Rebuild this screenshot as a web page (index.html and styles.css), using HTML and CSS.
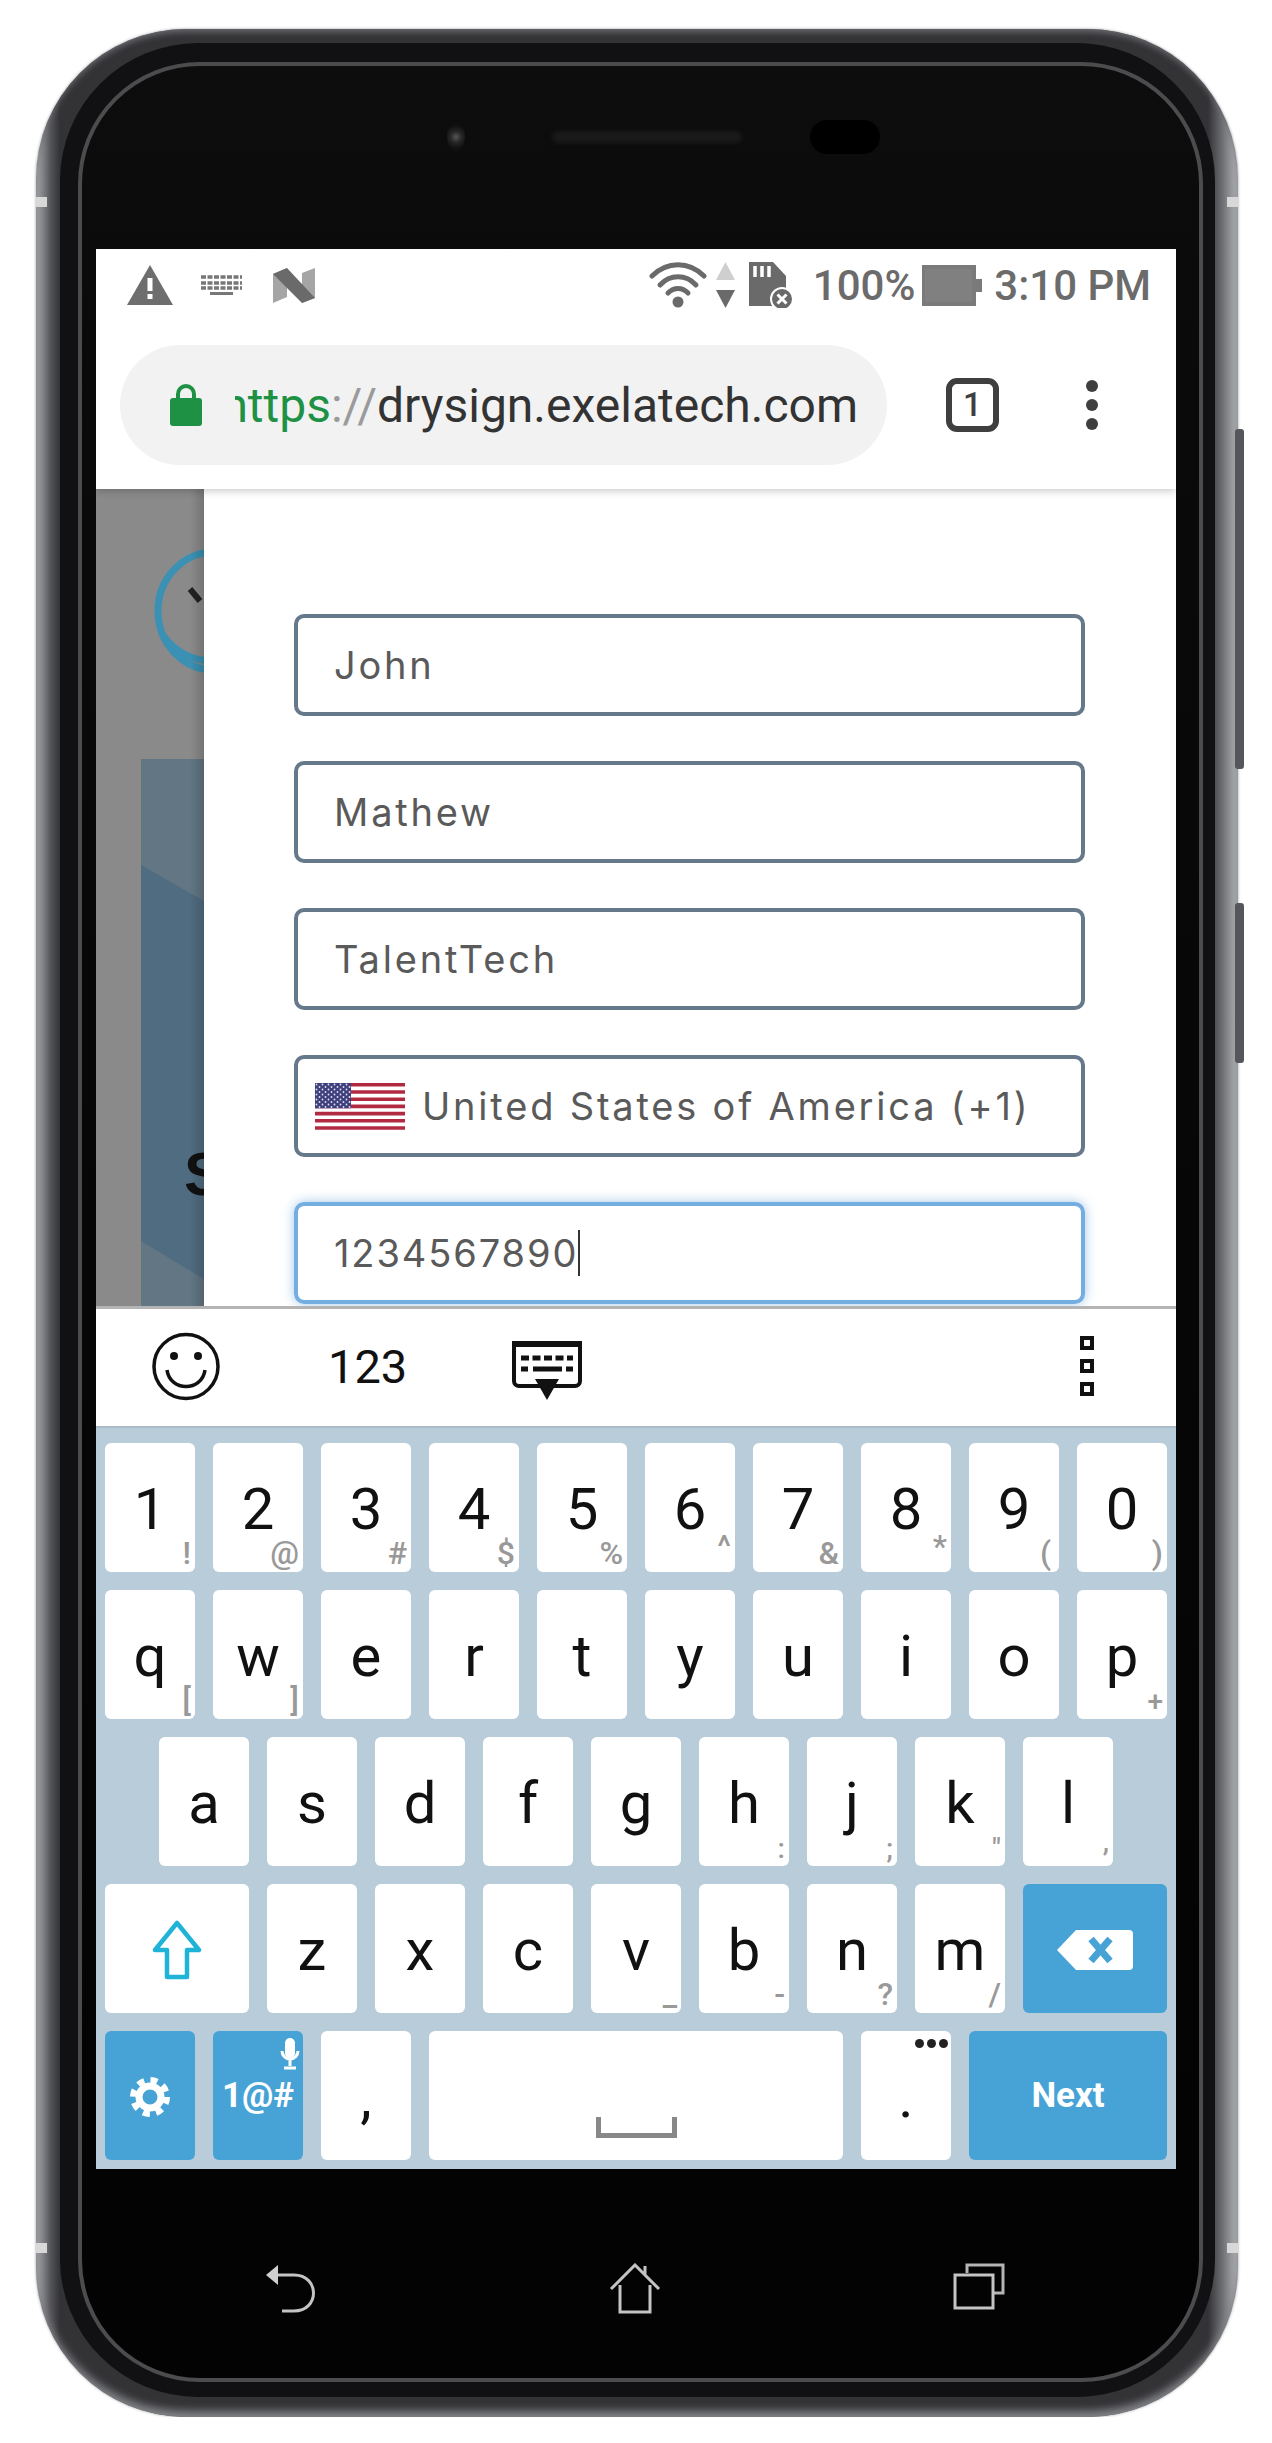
FILE: index.html
```html
<!DOCTYPE html>
<html lang="en">
<head>
  <meta charset="UTF-8" />
  <title>Phone form</title>
  <link rel="stylesheet" href="styles.css">
</head>
<body>
  <div class="phone">
    <span class="side-btn side-btn-long"></span>
    <span class="side-btn side-btn-short"></span>
    <span class="notch notch-tl"></span>
    <span class="notch notch-tr"></span>
    <span class="notch notch-bl"></span>
    <span class="notch notch-br"></span>
    <div class="frame">
      <div class="face">
        <div class="sensors">
          <span class="camera"></span>
          <span class="speaker"></span>
          <span class="oval"></span>
        </div>

        <div class="screen">
          <div class="chrome">
            <div class="status">
              <svg class="ic-warn" width="46" height="40" viewBox="0 0 46 40">
                <polygon points="23,0 46,40 0,40" fill="#6e6e6e"/>
                <rect x="20.5" y="13" width="5" height="13" fill="#fff"/>
                <rect x="20.5" y="29" width="5" height="5" fill="#fff"/>
              </svg>
              <svg class="ic-kb" width="41" height="20" viewBox="0 0 41 20">
                <path d="M0 2h41M0 8h41M0 13h41" stroke="#777" stroke-width="3.5" stroke-dasharray="5 1.5"/>
                <rect x="9" y="17" width="23" height="3" fill="#777"/>
              </svg>
              <svg class="ic-n" width="42" height="35" viewBox="0 0 42 35">
                <polygon points="0,6 14,0 14,29 0,35" fill="#a5a5a5"/>
                <polygon points="29,5 42,0 42,30 29,35" fill="#a5a5a5"/>
                <polygon points="0,6 14,0 42,30 29,35" fill="#6a6a6a"/>
              </svg>
              <svg class="ic-wifi" width="58" height="46" viewBox="0 0 58 46">
                <g fill="none" stroke="#6a6a6a" stroke-width="5" stroke-linecap="round">
                  <path d="M3 14C18 -1 40 -1 55 14"/>
                  <path d="M11 23C21 12 37 12 47 23"/>
                  <path d="M19 31C25 25 33 25 39 31"/>
                </g>
                <circle cx="29" cy="40" r="5.5" fill="#6a6a6a"/>
              </svg>
              <svg class="ic-arrows" width="19" height="46" viewBox="0 0 19 46">
                <polygon points="9.5,0 19,18 0,18" fill="#cfcfcf"/>
                <polygon points="0,28 19,28 9.5,46" fill="#6a6a6a"/>
              </svg>
              <svg class="ic-sd" width="46" height="46" viewBox="0 0 46 46">
                <path d="M0 0H24L37 14V44H0Z" fill="#6a6a6a"/>
                <path d="M6 4v11M13 4v11M20 4v11" stroke="#fff" stroke-width="3.5"/>
                <circle cx="33" cy="37" r="11" fill="#6a6a6a" stroke="#fff" stroke-width="2"/>
                <path d="M28.5 32.5l9 9M37.5 32.5l-9 9" stroke="#fff" stroke-width="3"/>
              </svg>
              <span class="stat-text stat-pct">100%</span>
              <svg class="ic-batt" width="60" height="41" viewBox="0 0 60 41">
                <rect x="0" y="0" width="54" height="41" fill="#7a7a7a"/>
                <rect x="54" y="14" width="6" height="13" fill="#7a7a7a"/>
                <rect x="3" y="4" width="47" height="33" fill="#808080"/>
              </svg>
              <span class="stat-text stat-time">3:10 PM</span>
            </div>
            <div class="urlrow">
              <div class="pill">
                <svg class="ic-lock" width="32" height="42" viewBox="0 0 32 42">
                  <path d="M8 17V10a8 8 0 0 1 16 0v7" fill="none" stroke="#1e9145" stroke-width="4"/>
                  <rect x="0" y="14" width="32" height="28" rx="3" fill="#1e9145"/>
                </svg>
                <div class="url"><span class="url-in"><span class="url-https">https</span><span class="url-sep">://</span>drysign.exelatech.com</span></div>
              </div>
              <div class="tabs">1</div>
              <div class="dots"><i></i><i></i><i></i></div>
            </div>
          </div>

          <div class="page">
            <svg class="backdrop" width="108" height="817" viewBox="0 0 108 817">
              <rect width="108" height="817" fill="#8a8a8a"/>
              <g fill="none" stroke="#3a91b3" stroke-width="7">
                <ellipse cx="118" cy="122" rx="56" ry="59"/>
                <path d="M66 145C80 165 100 172 118 172"/>
              </g>
              <path d="M94 100l10 12" stroke="#222" stroke-width="6"/>
              <rect x="45" y="270" width="63" height="547" fill="#627684"/>
              <polygon points="45,376 108,412 108,790 45,752" fill="#506c80"/>
              <text x="88" y="706" class="backdrop-s">S</text>
              <rect x="94" width="14" height="817" fill="url(#modalfade)"/>
              <defs>
                <linearGradient id="modalfade">
                  <stop offset="0" stop-color="#000" stop-opacity="0"/>
                  <stop offset="1" stop-color="#000" stop-opacity=".16"/>
                </linearGradient>
              </defs>
            </svg>
            <div class="modal">
              <div class="field">John</div>
              <div class="field">Mathew</div>
              <div class="field">TalentTech</div>
              <div class="field field-country">
                <svg class="flag" width="90" height="47" viewBox="0 0 90 47">
                  <defs>
                    <pattern id="stars" width="6" height="5" patternUnits="userSpaceOnUse">
                      <circle cx="1.5" cy="1.5" r=".9" fill="#dfe0ee"/>
                      <circle cx="4.5" cy="4" r=".9" fill="#dfe0ee"/>
                    </pattern>
                  </defs>
                  <rect width="90" height="47" fill="#fff"/>
                  <path d="M0 1.8h90M0 9h90M0 16.2h90M0 23.4h90M0 30.6h90M0 37.8h90M0 45h90" stroke="#b22a41" stroke-width="3.6"/>
                  <rect width="36" height="25.3" fill="#3f3f7d"/>
                  <rect width="36" height="25.3" fill="url(#stars)"/>
                </svg>
                United States of America (+1)
              </div>
              <div class="field field-focus">1234567890<span class="caret"></span></div>
            </div>
          </div>

          <div class="kb-tools">
            <svg class="ic-smile" width="68" height="69" viewBox="0 0 68 69">
              <circle cx="34" cy="34.5" r="32" fill="none" stroke="#111" stroke-width="3.5"/>
              <circle cx="22" cy="24" r="4" fill="#111"/>
              <circle cx="46" cy="24" r="4" fill="#111"/>
              <path d="M15 38C18 60 50 60 53 38" fill="none" stroke="#111" stroke-width="3.5"/>
            </svg>
            <span class="tool-num">123</span>
            <svg class="ic-hide" width="70" height="59" viewBox="0 0 70 59">
              <path d="M2 1.5H68V40a5 5 0 0 1-5 5H7a5 5 0 0 1-5-5Z" fill="none" stroke="#111" stroke-width="4"/>
              <rect x="0" y="0" width="70" height="6" fill="#111"/>
              <path d="M9 17h52" stroke="#111" stroke-width="5" stroke-dasharray="8 3.5"/>
              <path d="M9 28h7M21 28h29M54 28h7" stroke="#111" stroke-width="5"/>
              <polygon points="23,38 47,38 35,59" fill="#111"/>
            </svg>
            <div class="tool-more"><i></i><i></i><i></i></div>
          </div>

          <div class="keys">
            <div class="row">
              <div class="key">1<span class="hint">!</span></div>
              <div class="key">2<span class="hint">@</span></div>
              <div class="key">3<span class="hint">#</span></div>
              <div class="key">4<span class="hint">$</span></div>
              <div class="key">5<span class="hint">%</span></div>
              <div class="key">6<span class="hint hint-up">^</span></div>
              <div class="key">7<span class="hint">&amp;</span></div>
              <div class="key">8<span class="hint hint-up">*</span></div>
              <div class="key">9<span class="hint hint-in">(</span></div>
              <div class="key">0<span class="hint">)</span></div>
            </div>
            <div class="row">
              <div class="key">q<span class="hint">[</span></div>
              <div class="key">w<span class="hint">]</span></div>
              <div class="key">e</div>
              <div class="key">r</div>
              <div class="key">t</div>
              <div class="key">y</div>
              <div class="key">u</div>
              <div class="key">i</div>
              <div class="key">o</div>
              <div class="key">p<span class="hint hint-sm">+</span></div>
            </div>
            <div class="row row-mid">
              <div class="key">a</div>
              <div class="key">s</div>
              <div class="key">d</div>
              <div class="key">f</div>
              <div class="key">g</div>
              <div class="key">h<span class="hint hint-sm">:</span></div>
              <div class="key">j<span class="hint hint-sm">;</span></div>
              <div class="key">k<span class="hint hint-sm">"</span></div>
              <div class="key">l<span class="hint hint-sm hint-up">,</span></div>
            </div>
            <div class="row">
              <div class="key key-wide">
                <svg width="50" height="60" viewBox="0 0 50 60">
                  <path d="M25 3L47 30H35V57H15V30H3Z" fill="none" stroke="#1fb3d8" stroke-width="4.5" stroke-linejoin="round"/>
                </svg>
              </div>
              <div class="key">z</div>
              <div class="key">x</div>
              <div class="key">c</div>
              <div class="key">v<span class="hint">_</span></div>
              <div class="key">b<span class="hint">-</span></div>
              <div class="key">n<span class="hint">?</span></div>
              <div class="key">m<span class="hint">/</span></div>
              <div class="key key-wide key-blue">
                <svg width="76" height="40" viewBox="0 0 76 40">
                  <path d="M19 0H72a4 4 0 0 1 4 4V36a4 4 0 0 1-4 4H19L0 20Z" fill="#fff"/>
                  <path d="M34 9l19 22M53 9L34 31" stroke="#47a3d6" stroke-width="7"/>
                </svg>
              </div>
            </div>
            <div class="row">
              <div class="key key-blue">
                <svg width="40" height="42" viewBox="0 0 40 42">
                  <circle cx="20" cy="21" r="11" fill="none" stroke="#fff" stroke-width="7"/>
                  <circle cx="20" cy="21" r="17" fill="none" stroke="#fff" stroke-width="6" stroke-dasharray="7 6.35"/>
                </svg>
              </div>
              <div class="key key-blue key-label">1@#
                <svg class="ic-mic" width="20" height="32" viewBox="0 0 20 32">
                  <rect x="5" y="0" width="10" height="20" rx="5" fill="#fff"/>
                  <path d="M2 13a8 8 0 0 0 16 0M10 21v7M4 30h12" fill="none" stroke="#fff" stroke-width="3"/>
                </svg>
              </div>
              <div class="key">,</div>
              <div class="key key-space">
                <svg width="81" height="21" viewBox="0 0 81 21">
                  <path d="M2.5 0V18.5H78.5V0" fill="none" stroke="#888" stroke-width="5"/>
                </svg>
              </div>
              <div class="key">.<span class="more-dots"><i></i><i></i><i></i></span></div>
              <div class="key key-blue key-next">Next</div>
            </div>
          </div>
        </div>

        <div class="navkeys">
          <svg width="53" height="50" viewBox="0 0 53 50">
            <path d="M8 12H30C56 12 56 48 30 48H18" fill="none" stroke="#c4c4c4" stroke-width="3"/>
            <polygon points="14,2 2,12 14,22" fill="#d0d0d0"/>
          </svg>
          <svg width="52" height="51" viewBox="0 0 52 51">
            <path d="M2 26L26 2L50 26M11 22V49H41V22M36 3V12" fill="none" stroke="#c4c4c4" stroke-width="3"/>
          </svg>
          <svg width="52" height="47" viewBox="0 0 52 47">
            <path d="M14 10V2H50V30H40" fill="none" stroke="#b4b4b4" stroke-width="3"/>
            <rect x="2" y="12" width="38" height="33" fill="none" stroke="#c4c4c4" stroke-width="3"/>
          </svg>
        </div>
      </div>
    </div>
  </div>
</body>
</html>
```

FILE: styles.css
```css
body {
  margin: 0;
  background-color: #fff;
  font-family: Roboto, sans-serif;
}
.phone {
  position: relative;
  box-sizing: border-box;
  width: 1202px;
  height: 2388px;
  margin: 29px 0 0 36px;
  padding: 14px 23px 20px 24px;
  border-radius: 150px;
  background: linear-gradient(90deg, #a9abae 0, #55565a 1.2%, #333336 2%, #333336 97.5%, #6d6f73 98.7%, #b5b7ba 100%);
  box-shadow: inset 0 5px 6px -2px #6a6b70, inset 0 -8px 8px -2px #85868a, 0 0 3px rgba(0,0,0,0.4);
}
.frame {
  box-sizing: border-box;
  height: 100%;
  padding: 19px 12px 15px 18px;
  border-radius: 138px;
  background-color: #111113;
}
.face {
  box-sizing: border-box;
  height: 100%;
  padding: 0 16px 0 14px;
  border: 4px solid #4c4c4e;
  border-radius: 122px;
  background: linear-gradient(180deg, #0d0d0d 0, #0a0a0a 12%, #030303 90%);
}
.side-btn {
  position: absolute;
  left: 1199px;
  width: 9px;
  background-color: #55565c;
  border-radius: 3px;
}
.side-btn-long { top: 400px; height: 340px; }
.side-btn-short { top: 874px; height: 160px; }
.notch {
  position: absolute;
  width: 11px;
  height: 10px;
  background-color: #d8d8d8;
}
.notch-tl { left: 0; top: 168px; }
.notch-tr { right: 0; top: 168px; }
.notch-bl { left: 0; top: 2214px; }
.notch-br { right: 0; top: 2214px; }

/* top of the phone */
.sensors {
  display: flex;
  align-items: center;
  box-sizing: border-box;
  height: 183px;
  padding: 0 0 42px 351px;
}
.camera {
  width: 18px;
  height: 28px;
  border-radius: 50%;
  background: radial-gradient(circle, #555 0, #252525 35%, #101010 70%);
}
.speaker {
  width: 190px;
  height: 12px;
  margin-left: 87px;
  border-radius: 7px;
  background-color: #1a1a1a;
  filter: blur(2px);
}
.oval {
  width: 70px;
  height: 34px;
  margin-left: 68px;
  border-radius: 17px;
  background-color: #000;
}

.screen {
  display: flex;
  flex-direction: column;
  width: 1080px;
  height: 1920px;
  overflow: hidden;
  background-color: #fff;
}

/* status bar and browser bar */
.chrome {
  position: relative;
  z-index: 2;
  height: 240px;
  flex-shrink: 0;
  background-color: #fff;
  box-shadow: 0 2px 8px rgba(0,0,0,0.22);
}
.status {
  display: flex;
  align-items: center;
  box-sizing: border-box;
  height: 96px;
  padding: 0 25px 24px 31px;
}
.ic-kb { margin-left: 28px; }
.ic-n { margin-left: 31px; }
.ic-wifi { margin-left: auto; }
.ic-arrows { margin-left: 9px; }
.ic-sd { margin-left: 14px; }
.stat-text {
  font-size: 42px;
  font-weight: 500;
  color: #6b6b6b;
}
.stat-pct { margin-left: 18px; }
.ic-batt { margin-left: 7px; }
.stat-time { margin-left: 12px; }
.urlrow {
  display: flex;
  align-items: center;
  height: 120px;
  padding-left: 24px;
}
.pill {
  display: flex;
  align-items: center;
  box-sizing: border-box;
  width: 767px;
  height: 120px;
  padding-left: 50px;
  border-radius: 60px;
  background-color: #f2f2f2;
}
.url {
  display: flex;
  justify-content: flex-end;
  width: 623px;
  margin-left: 33px;
  overflow: hidden;
  font-size: 48px;
  color: #333;
  white-space: nowrap;
}
.url-https { color: #1e9145; }
.url-sep { color: #9a9a9a; }
.tabs {
  box-sizing: border-box;
  width: 53px;
  height: 54px;
  margin-left: 59px;
  border: 6px solid #3f3f3f;
  border-radius: 11px;
  color: #3f3f3f;
  font-size: 33px;
  font-weight: 500;
  line-height: 42px;
  text-align: center;
}
.dots {
  display: flex;
  flex-direction: column;
  gap: 7px;
  margin-left: 87px;
}
.dots i {
  width: 12px;
  height: 12px;
  border-radius: 50%;
  background-color: #3f3f3f;
}

/* page under the keyboard */
.page {
  display: flex;
  flex-shrink: 0;
  height: 817px;
  overflow: hidden;
}
.backdrop {
  flex-shrink: 0;
  display: block;
}
.backdrop-s {
  font-family: "Liberation Sans", sans-serif;
  font-size: 62px;
  font-weight: 700;
  fill: #111;
}
.modal {
  display: flex;
  flex-direction: column;
  gap: 45px;
  flex: 1;
  padding: 125px 91px 0 90px;
  background-color: #fff;
}
.field {
  display: flex;
  align-items: center;
  flex-shrink: 0;
  box-sizing: border-box;
  height: 102px;
  padding-left: 36px;
  border: 4px solid #66798a;
  border-radius: 10px;
  color: #5a5a5a;
  font-family: Inter, sans-serif;
  font-size: 38px;
  letter-spacing: 2.8px;
}
.field-country {
  padding-left: 17px;
  gap: 17px;
}
.field-focus {
  border-color: #74aee0;
  box-shadow: 0 0 12px rgba(111,169,220,0.65);
  letter-spacing: 1.9px;
}
.caret {
  width: 2px;
  height: 46px;
  background-color: #333;
}

/* keyboard */
.kb-tools {
  display: flex;
  align-items: center;
  flex-shrink: 0;
  box-sizing: border-box;
  height: 122px;
  padding: 0 0 3px 56px;
  border-top: 3px solid #b4b4b4;
  border-bottom: 2px solid #aabbc7;
  background-color: #fff;
}
.tool-num {
  margin-left: 108px;
  font-size: 47px;
  font-weight: 400;
  color: #111;
}
.ic-hide {
  margin: 8px 0 0 105px;
}
.tool-more {
  display: flex;
  flex-direction: column;
  gap: 9px;
  margin-left: 498px;
}
.tool-more i {
  box-sizing: border-box;
  width: 14px;
  height: 14px;
  border: 4px solid #111;
}
.keys {
  display: flex;
  flex-direction: column;
  gap: 18px;
  flex: 1;
  padding: 15px 9px 0;
  background-color: #b8ccd9;
}
.row {
  display: flex;
  gap: 18px;
}
.row-mid {
  padding-left: 54px;
}
.key {
  position: relative;
  display: flex;
  align-items: center;
  justify-content: center;
  box-sizing: border-box;
  width: 90px;
  height: 129px;
  padding-top: 2px;
  border-radius: 6px;
  background-color: #fff;
  color: #111;
  font-size: 58px;
}
.key-wide { width: 144px; }
.key-space { width: 414px; padding-top: 64px; }
.key-next { width: 198px; }
.key-blue {
  background-color: #47a3d6;
  color: #fff;
}
.key-label, .key-next {
  padding-top: 0;
  font-size: 35px;
  font-weight: 700;
}
.ic-mic {
  position: absolute;
  top: 7px;
  right: 3px;
}
.hint {
  position: absolute;
  right: 4px;
  bottom: 3px;
  color: #999;
  font-size: 32px;
  font-weight: 500;
  line-height: 1;
}
.hint-up { bottom: 10px; }
.hint-in { right: 8px; }
.hint-sm { font-size: 28px; }
.more-dots {
  position: absolute;
  top: 8px;
  right: 3px;
  display: flex;
  gap: 3px;
}
.more-dots i {
  width: 9px;
  height: 9px;
  border-radius: 50%;
  background-color: #222;
}

/* hardware buttons */
.navkeys {
  display: flex;
  padding: 94px 0 0 168px;
  gap: 292px;
}
```
